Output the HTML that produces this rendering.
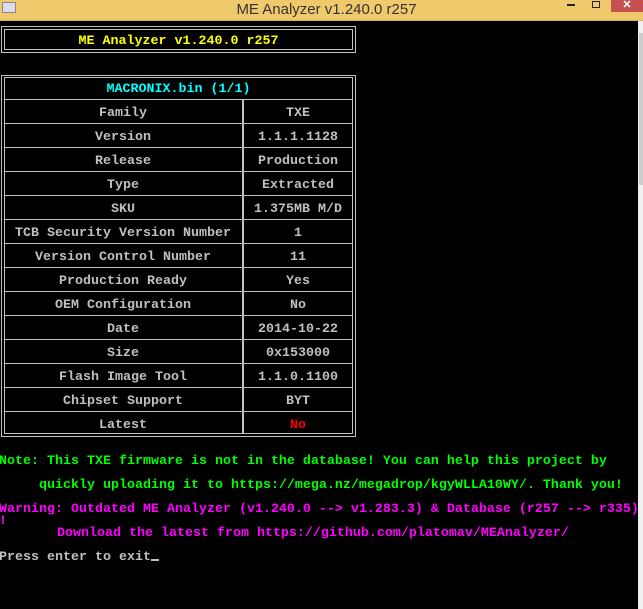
<!DOCTYPE html>
<html><head><meta charset="utf-8"><style>
*{margin:0;padding:0;box-sizing:border-box}
body{width:643px;height:609px;background:#000;position:relative;overflow:hidden;font-family:"Liberation Mono",monospace;font-size:13.33px;font-weight:bold}
.tb{position:absolute;left:0;top:0;width:643px;height:21px;background:#f0c96c;border-bottom:1px solid #d8b460}
.tt{position:absolute;left:0;width:643px;top:1px;text-align:center;font-family:"Liberation Sans",sans-serif;font-weight:normal;font-size:15px;color:#333;padding-left:10px}
.b{position:absolute;border:2px solid #c0c0c0}
.l{position:absolute;background:#c0c0c0}
.t{position:absolute;height:12px;line-height:12px;white-space:pre;text-align:center;color:#c0c0c0}
.p{position:absolute;left:-1px;white-space:pre;line-height:12px;height:12px}
</style></head><body>
<div class="tb"><div class="tt">ME Analyzer v1.240.0 r257</div>
<div style="position:absolute;left:2px;top:2px;width:14px;height:11px;border:1px solid #888;background:#dde"></div>
<div style="position:absolute;left:567px;top:4px;width:8px;height:2px;background:#222"></div>
<div style="position:absolute;left:592px;top:1px;width:8px;height:7px;border:1.5px solid #222"></div>
<div style="position:absolute;left:611px;top:0;width:32px;height:12px;background:#c75050;color:#fff;font-family:'Liberation Sans';font-size:11px;text-align:center;line-height:10px">✕</div>
</div>
<div style="position:absolute;left:638px;top:21px;width:5px;height:588px;background:#f0f0f0"></div>
<div style="position:absolute;left:639px;top:33px;width:4px;height:152px;background:#cdcdcd"></div>

<div class="l" style="left:1px;top:26px;width:355px;height:1px"></div>
<div class="l" style="left:1px;top:52px;width:355px;height:1px"></div>
<div class="l" style="left:1px;top:26px;width:1px;height:27px"></div>
<div class="l" style="left:355px;top:26px;width:1px;height:27px"></div>
<div class="b" style="left:4px;top:29px;width:349px;height:21px;border-width:1px"></div>
<div class="t" style="left:4px;width:349px;top:36px;color:#ffff00">ME Analyzer v1.240.0 r257</div>

<div class="l" style="left:1px;top:75px;width:355px;height:1px"></div>
<div class="l" style="left:1px;top:436px;width:355px;height:1px"></div>
<div class="l" style="left:1px;top:75px;width:1px;height:362px"></div>
<div class="l" style="left:355px;top:75px;width:1px;height:362px"></div>
<div class="b" style="left:4px;top:77px;width:349px;height:357px;border-width:1px"></div>
<div class="l" style="left:242px;top:100px;width:2px;height:334px"></div>
<div class="t" style="left:4px;width:349px;top:84px;color:#00ffff">MACRONIX.bin (1/1)</div>

<div id="rows"></div>
<script>
var r=[["Family","TXE"],["Version","1.1.1.1128"],["Release","Production"],["Type","Extracted"],["SKU","1.375MB M/D"],["TCB Security Version Number","1"],["Version Control Number","11"],["Production Ready","Yes"],["OEM Configuration","No"],["Date","2014-10-22"],["Size","0x153000"],["Flash Image Tool","1.1.0.1100"],["Chipset Support","BYT"],["Latest","No"]];
var h="";
for(var i=0;i<r.length;i++){var y=112+24*i;
h+='<div class="l" style="left:4px;top:'+(y-13)+'px;width:349px;height:1px"></div>';
h+='<div class="t" style="left:4px;width:238px;top:'+(y-4)+'px">'+r[i][0]+'</div>';
h+='<div class="t" style="left:244px;width:108px;top:'+(y-4)+'px;'+(i==13?'color:#ff0000':'')+'">'+r[i][1]+'</div>';}
document.getElementById("rows").innerHTML=h;
</script>

<div class="p" style="top:456px;color:#00ff00">Note: This TXE firmware is not in the database! You can help this project by</div>
<div class="p" style="top:480px;color:#00ff00">     quickly uploading it to https://mega.nz/megadrop/kgyWLLA10WY/. Thank you!</div>
<div class="p" style="top:504px;color:#ff00ff">Warning: Outdated ME Analyzer (v1.240.0 --> v1.283.3) &amp; Database (r257 --> r335)</div>
<div class="p" style="top:516px;color:#ff00ff">!</div>
<div class="p" style="top:528px;left:1px;color:#ff00ff">       Download the latest from https://github.com/platomav/MEAnalyzer/</div>
<div class="p" style="top:552px;color:#c0c0c0">Press enter to exit<span style="display:inline-block;width:8px;height:2px;background:#c0c0c0;vertical-align:-1px"></span></div>
</body></html>
